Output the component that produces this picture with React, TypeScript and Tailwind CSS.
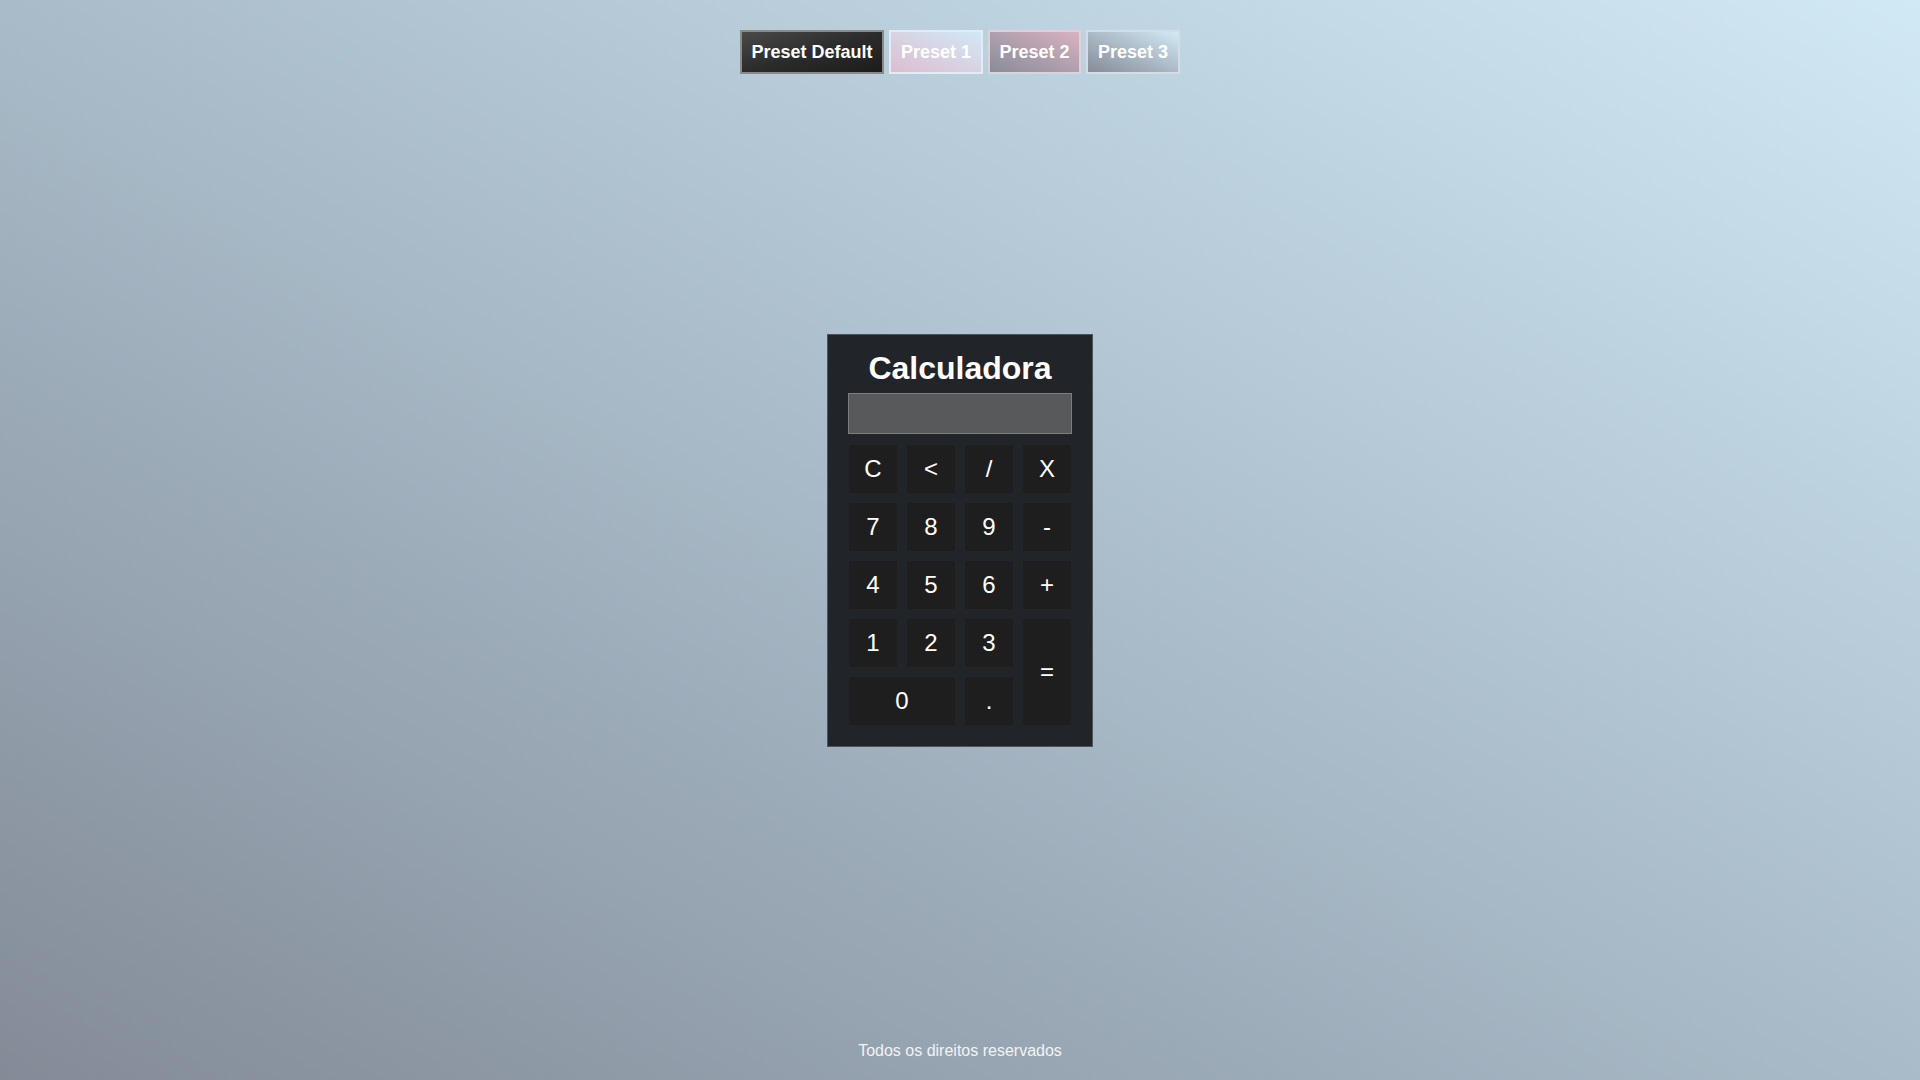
const presets = [
  {
    label: 'Preset Default',
    className:
      'w-[144px] border-[#8a8a8a] bg-gradient-to-br from-[#4a4a4a] via-[#2c2c2c] to-[#1c1c1c]',
  },
  {
    label: 'Preset 1',
    className: 'w-[94px] border-[#e4ebf2] bg-gradient-to-tr from-[#dcbdd0] to-[#d0e9f6]',
  },
  {
    label: 'Preset 2',
    className: 'w-[93px] border-[#dcd2dc] bg-gradient-to-tr from-[#888c98] to-[#d9b2c2]',
  },
  {
    label: 'Preset 3',
    className: 'w-[94px] border-[#d4dde6] bg-gradient-to-tr from-[#858c98] to-[#d2eaf6]',
  },
]

const keys = [
  { label: 'C' },
  { label: '<' },
  { label: '/' },
  { label: 'X' },
  { label: '7' },
  { label: '8' },
  { label: '9' },
  { label: '-' },
  { label: '4' },
  { label: '5' },
  { label: '6' },
  { label: '+' },
  { label: '1' },
  { label: '2' },
  { label: '3' },
  { label: '=', span: 'row-span-2' },
  { label: '0', span: 'col-span-2' },
  { label: '.' },
]

export default function App() {
  return (
    <div
      className="flex h-screen flex-col bg-gradient-to-tr from-[#838b97] via-[#a9bbc9] to-[#d1e9f5] text-white"
      style={{ fontFamily: '"Liberation Sans", Arial, sans-serif' }}
    >
      {/* Presets */}
      <header className="flex h-[104px] items-start justify-center gap-[5px] pt-[30px]">
        {presets.map((p) => (
          <button
            key={p.label}
            className={`h-[44px] border-2 text-[18px] font-bold text-white ${p.className}`}
          >
            {p.label}
          </button>
        ))}
      </header>

      <main className="flex flex-1 items-center justify-center">
        <div className="w-[266px] border border-[#4e5358] bg-[#212428] px-5 pb-[21px] pt-[15px]">
          <h1 className="text-center text-[32px] font-bold leading-[37px]">Calculadora</h1>
          <div className="mt-[6px] h-[41px] border border-[#7b7d80] bg-[#58595b]" />
          <div className="mt-[11px] grid grid-cols-4 grid-rows-[repeat(5,48px)] gap-[10px] px-[1px]">
            {keys.map((k) => (
              <button
                key={k.label}
                className={`flex items-center justify-center bg-[#1e1e1e] text-[24px] text-white ${k.span ?? ''}`}
              >
                {k.label}
              </button>
            ))}
          </div>
        </div>
      </main>

      <footer className="flex h-[104px] items-end justify-center pb-[17px] text-[16px] text-[#f2f4f6]">
        Todos os direitos reservados
      </footer>
    </div>
  )
}
